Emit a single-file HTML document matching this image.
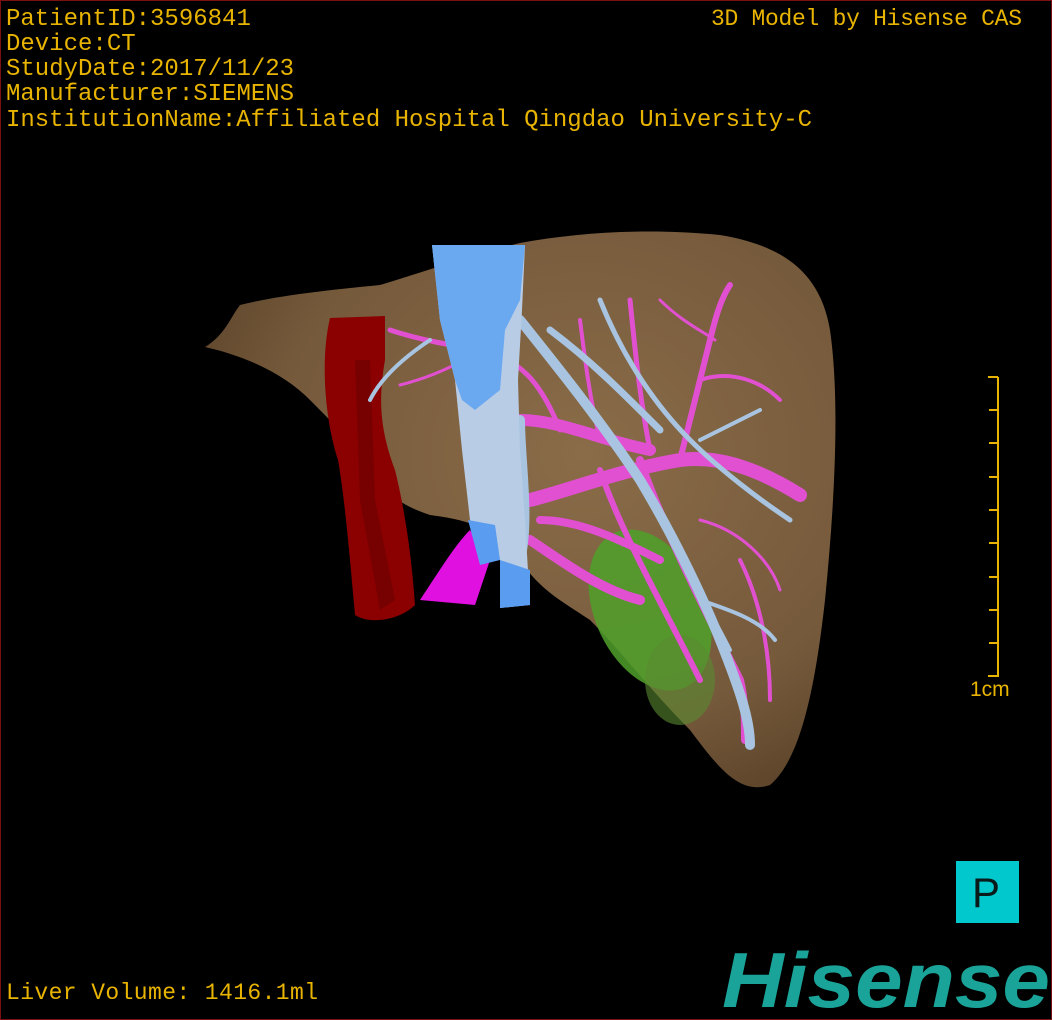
<!DOCTYPE html>
<html><head><meta charset="utf-8"><style>
html,body{margin:0;padding:0;background:#000;}
#w{position:relative;width:1050px;height:1018px;border:1px solid #7a1010;background:#000;overflow:hidden;}
svg{position:absolute;left:0;top:0;}
.t{font-family:"Liberation Mono",monospace;fill:#e8b400;}
</style></head><body><div id="w">
<svg width="1050" height="1018" viewBox="1 1 1050 1018">
<defs>
<radialGradient id="lv" cx="0.6" cy="0.4" r="0.7">
<stop offset="0" stop-color="#8a6c48"/><stop offset="0.7" stop-color="#75593b"/><stop offset="1" stop-color="#5a4228"/>
</radialGradient>
</defs>
<!-- liver -->
<path d="M205,347 C225,335 230,318 240,305 C280,295 330,290 380,285 C430,270 470,255 520,243 C580,232 650,228 720,235 C780,245 820,270 830,330 C840,400 835,500 825,600 C815,690 800,760 770,785 C740,795 720,770 690,730 C650,690 620,650 590,620 C560,600 540,590 520,560 C500,530 470,520 430,515 C400,505 390,495 380,480 C360,450 330,420 310,400 C280,370 240,355 205,347 Z" fill="url(#lv)"/>
<!-- green gallbladder -->
<ellipse cx="650" cy="610" rx="55" ry="85" transform="rotate(-25 650 610)" fill="#4fa02a" opacity="0.85"/>
<ellipse cx="680" cy="680" rx="35" ry="45" fill="#5a8a30" opacity="0.6"/>
<!-- red IVC -->
<path d="M330,318 L385,316 L385,360 C378,400 380,430 395,470 C405,510 412,560 415,605 C400,620 370,625 355,615 C350,560 345,500 338,460 C325,420 320,360 330,318 Z" fill="#8b0000"/>
<path d="M355,360 L370,360 L375,500 L395,600 L380,610 L360,500 Z" fill="#6a0000" opacity="0.6"/>
<!-- magenta blob -->
<path d="M420,600 C440,570 455,545 470,530 L490,560 L475,605 Z" fill="#e010e0"/>
<!-- pink vessels -->
<g stroke="#e050d0" stroke-linecap="round" fill="none">
<path d="M530,500 C570,490 620,470 680,460 C720,455 760,470 800,495" stroke-width="14"/>
<path d="M520,420 C560,420 600,440 650,450" stroke-width="12"/>
<path d="M640,460 C660,520 700,600 740,680 C745,700 745,720 745,740" stroke-width="8"/>
<path d="M600,470 C620,530 660,600 700,680" stroke-width="6"/>
<path d="M680,460 C690,420 700,380 710,340 C715,320 720,300 730,285" stroke-width="6"/>
<path d="M700,380 C730,370 760,380 780,400" stroke-width="4"/>
<path d="M650,450 C640,400 635,350 630,300" stroke-width="5"/>
<path d="M600,440 C590,400 585,360 580,320" stroke-width="4"/>
<path d="M660,300 C680,320 700,330 715,340" stroke-width="3"/>
<path d="M560,430 C540,380 520,360 480,350 C450,345 420,340 390,330" stroke-width="5"/>
<path d="M480,350 C450,370 420,380 400,385" stroke-width="3"/>
<path d="M740,560 C760,600 770,650 770,700" stroke-width="4"/>
<path d="M700,520 C740,530 770,560 780,590" stroke-width="3"/>
<path d="M530,540 C560,560 600,590 640,600" stroke-width="10"/>
<path d="M540,520 C580,520 620,540 660,560" stroke-width="8"/>
</g>
<!-- light blue hepatic veins -->
<g stroke="#a8c4e0" stroke-linecap="round" fill="none">
<path d="M520,320 C560,370 600,420 640,480 C670,530 700,590 720,640 C740,690 750,720 750,745" stroke-width="10"/>
<path d="M550,330 C590,360 620,390 660,430" stroke-width="7"/>
<path d="M600,300 C620,350 650,400 690,440 C720,470 760,500 790,520" stroke-width="5"/>
<path d="M520,420 C520,460 530,520 520,560" stroke-width="10"/>
<path d="M650,500 C680,560 710,610 730,650" stroke-width="4"/>
<path d="M700,600 C730,610 760,620 775,640" stroke-width="4"/>
<path d="M430,340 C400,360 380,380 370,400" stroke-width="4"/>
<path d="M760,410 C740,420 720,430 700,440" stroke-width="4"/>
</g>
<!-- blue vena cava tube -->
<path d="M432,245 L525,245 L522,310 L518,380 L520,450 L525,520 L530,605 L500,608 L500,560 L490,560 L470,520 L462,450 L455,380 L440,320 Z" fill="#b8cce6"/>
<path d="M432,245 L525,245 L520,300 L505,330 L500,390 L475,410 L462,400 L455,380 L440,320 Z" fill="#6aa8f0"/>
<path d="M468,520 L495,525 L500,560 L480,565 Z" fill="#5a9cf0"/>
<path d="M500,560 L530,570 L530,605 L500,608 Z" fill="#5a9cf0"/>
<!-- scale bar -->
<g stroke="#e8b400" stroke-width="2">
<line x1="998" y1="377" x2="998" y2="677"/>
<line x1="988" y1="377" x2="998" y2="377"/><line x1="989" y1="410" x2="998" y2="410"/><line x1="989" y1="443" x2="998" y2="443"/><line x1="989" y1="477" x2="998" y2="477"/><line x1="989" y1="510" x2="998" y2="510"/><line x1="989" y1="543" x2="998" y2="543"/><line x1="989" y1="577" x2="998" y2="577"/><line x1="989" y1="610" x2="998" y2="610"/><line x1="989" y1="643" x2="998" y2="643"/><line x1="988" y1="676" x2="998" y2="676"/>
</g>
<text x="970" y="696" font-family="Liberation Sans,sans-serif" font-size="21" fill="#e8b400">1cm</text>
<!-- text -->
<text class="t" x="6" y="25" font-size="24">PatientID:3596841</text>
<text class="t" x="6" y="50" font-size="24">Device:CT</text>
<text class="t" x="6" y="75" font-size="24">StudyDate:2017/11/23</text>
<text class="t" x="6" y="100" font-size="24">Manufacturer:SIEMENS</text>
<text class="t" x="6" y="126" font-size="24" textLength="806">InstitutionName:Affiliated Hospital Qingdao University-C</text>
<text class="t" x="711" y="25" font-size="23" textLength="311">3D Model by Hisense CAS</text>
<text class="t" x="6" y="999" font-size="23" textLength="312">Liver Volume: 1416.1ml</text>
<!-- P box -->
<rect x="956" y="861" width="63" height="62" fill="#00c8cc"/>
<text x="972" y="907" font-family="Liberation Sans,sans-serif" font-size="42" fill="#0a1a1a">P</text>
<!-- Hisense -->
<text x="722" y="1007" font-family="Liberation Sans,sans-serif" font-weight="bold" font-style="italic" font-size="78" fill="#1aa398" textLength="328" lengthAdjust="spacingAndGlyphs">Hisense</text>
</svg>
</div></body></html>
